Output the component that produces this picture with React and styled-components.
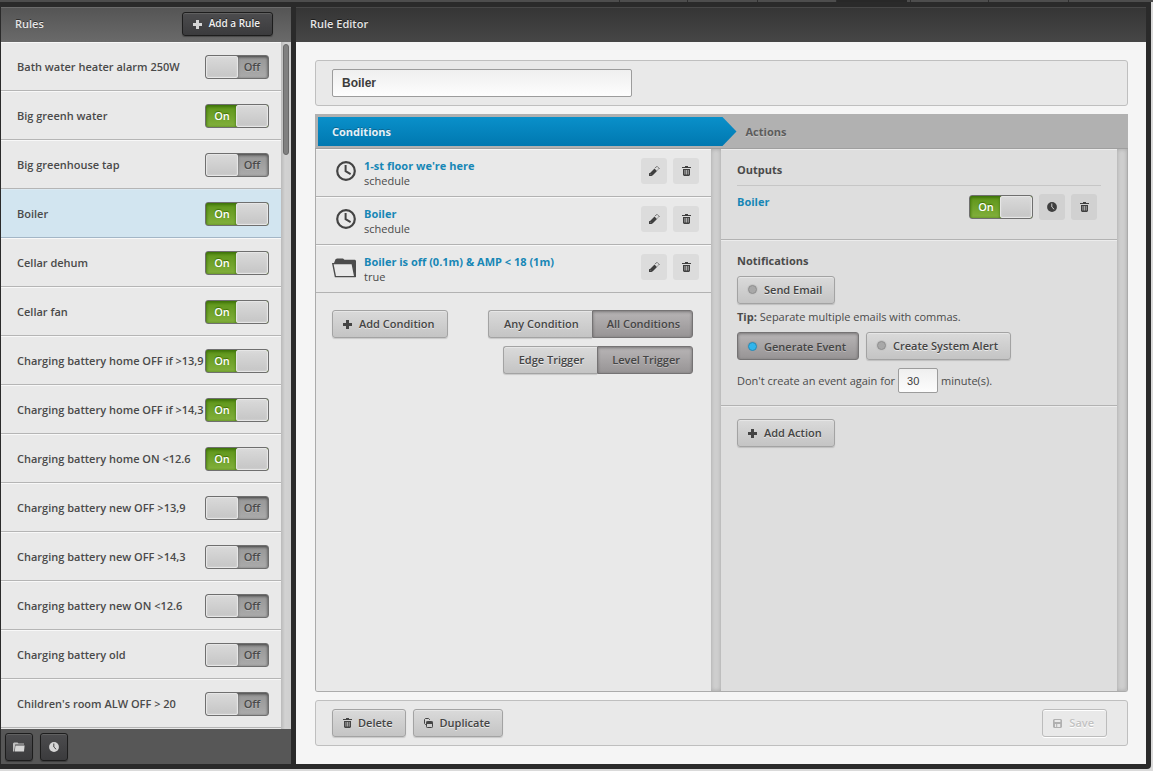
import React, { useState } from "react";
import styled, { createGlobalStyle, css } from "styled-components";

const GlobalStyle = createGlobalStyle`
  *, *::before, *::after { box-sizing: border-box; }
  body {
    margin: 0;
    background: #fff;
    color: #4a4a4a;
    font: 11px/15px "Open Sans", "Noto Sans", sans-serif;
  }
  button, input { font: inherit; color: inherit; margin: 0; }
  button { cursor: pointer; }
  a { color: #1787b6; text-decoration: none; }
  h1, h2, h3, p, ul { margin: 0; padding: 0; font-size: 11px; list-style: none; }
`;

/* ---------- page frame ---------- */

const Page = styled.div`
  display: flex;
  flex-direction: column;
  height: 100vh;
  min-height: 600px;
  margin-right: 3px;
  padding-right: 2px;
  padding-bottom: 2px;
  background: #dadada;
`;

const TabStrip = styled.nav`
  display: flex;
  justify-content: flex-end;
  gap: 3px;
  flex: none;
  height: 2px;
  margin-right: -2px;
  padding-right: 2px;
  background: #4d4d4d;
`;

const StripTab = styled.span`
  width: ${(p) => p.$width}px;
  border-left: 1px solid #2e2e2e;
  background: ${(p) => (p.$active ? "#282828" : "#4d4d4d")};
`;

const Frame = styled.div`
  display: grid;
  grid-template-columns: 290px minmax(0, 1fr);
  column-gap: 5px;
  flex: 1;
  min-height: 0;
  padding: 5px 5px 5px 1px;
  background: #2a2a2a;
  border-radius: 0 0 4px 0;
`;

const Panel = styled.section`
  display: flex;
  flex-direction: column;
  min-width: 0;
  min-height: 0;
  background: ${(p) => p.$bg};
`;

const PanelHeader = styled.header`
  display: flex;
  align-items: center;
  justify-content: space-between;
  flex: none;
  height: 35px;
  padding: 0 18px 3px 14px;
  border-top: 1px solid ${(p) => (p.$dark ? "#484848" : "#6c6c6c")};
  background: ${(p) =>
    p.$dark ? "linear-gradient(#353535, #464646)" : "linear-gradient(#555, #6a6a6a)"};
  color: #e6e6e6;
  text-shadow: 0 -1px 0 rgba(0, 0, 0, 0.5);
`;

const PanelTitle = styled.h1`
  font-weight: 600;
`;

/* ---------- buttons ---------- */

const DarkButton = styled.button`
  display: inline-flex;
  align-items: center;
  justify-content: center;
  gap: 6px;
  height: ${(p) => (p.$square ? 28 : 24)}px;
  width: ${(p) => (p.$square ? "28px" : "auto")};
  padding: ${(p) => (p.$square ? 0 : "0 12px 0 10px")};
  border: 1px solid #1d1d1d;
  border-radius: 3px;
  background: linear-gradient(#4c4c4e, #3b3b3d);
  box-shadow: inset 0 1px 0 #606060, 0 1px 1px rgba(0, 0, 0, 0.3);
  color: #f0f0f0;
  font-size: 10px;
  font-weight: 600;
  text-shadow: 0 -1px 0 #222;
  & svg { color: #d6d6d6; }
`;

const pressed = css`
  border-color: #757374;
  background: linear-gradient(#b8b5b6, #979495);
  box-shadow: inset 0 1px 3px rgba(0, 0, 0, 0.35);
  text-shadow: 0 1px 0 rgba(255, 255, 255, 0.3);
`;

const Button = styled.button`
  display: inline-flex;
  align-items: center;
  gap: 6px;
  height: 28px;
  padding: 0 12px 1px 10px;
  border: 1px solid #a3a3a3;
  border-radius: 3px;
  background: linear-gradient(#dadada, #c4c4c4);
  box-shadow: inset 0 1px 0 #e6e6e6, 0 1px 1px rgba(0, 0, 0, 0.14);
  color: #444;
  font-weight: 600;
  white-space: nowrap;
  text-shadow: 0 1px 0 rgba(255, 255, 255, 0.6);
  ${(p) => p.$pressed && pressed}
  &:disabled {
    cursor: default;
    border-color: #bcbcbc;
    background: transparent;
    box-shadow: inset 0 1px 0 #fff, 0 1px 0 #fff;
    color: #c2c2c2;
    text-shadow: 0 1px 0 #fff;
  }
`;

const ToggleButton = styled(Button)`
  padding-bottom: ${(p) => (p.$pressed ? 0 : 1)}px;
`;

const Segments = styled.div`
  display: flex;
`;

const Segment = styled(Button)`
  padding: 0 ${(p) => (p.$pressed ? 12 : 13)}px 1px ${(p) => (p.$pressed ? 14 : 15)}px;
  &:first-child { border-right: 0; border-radius: 3px 0 0 3px; }
  &:last-child { border-radius: 0 3px 3px 0; }
`;

const IconButton = styled.button`
  display: inline-flex;
  align-items: center;
  justify-content: center;
  width: 26px;
  height: 26px;
  padding: 0;
  border: 0;
  border-radius: 3px;
  background: ${(p) => (p.$deep ? "#d1d1d1" : "#dcdcdc")};
  color: #3f3f3f;
`;

const Led = styled.span`
  width: 9px;
  height: 9px;
  margin-right: 1px;
  border: 1px solid ${(p) => (p.$on ? "#2789b4" : "#8f8f8f")};
  border-radius: 50%;
  background: ${(p) => (p.$on ? "#31b5ec" : "#a8a8a8")};
  box-shadow: 0 0 0 1px ${(p) => (p.$on ? "#a09ea0" : "#c6c6c6")};
`;

/* ---------- switch ---------- */

const SwitchLabel = styled.label`
  position: relative;
  display: flex;
  flex: none;
  width: 64px;
  height: 24px;
  border: 1px solid #6f6f6f;
  border-radius: 3px;
  overflow: hidden;
  background: ${(p) =>
    p.$on ? "linear-gradient(#5c9418, #82b03c)" : "linear-gradient(#969696, #ababab)"};
  box-shadow: inset 0 1px 3px rgba(0, 0, 0, 0.35);
  cursor: pointer;
`;

const SwitchInput = styled.input`
  position: absolute;
  inset: 0;
  opacity: 0;
  cursor: pointer;
`;

const SwitchText = styled.span`
  flex: 1;
  order: ${(p) => (p.$on ? 0 : 1)};
  padding: ${(p) => (p.$on ? "0 0 0 2px" : "0 2px 0 0")};
  color: ${(p) => (p.$on ? "#fff" : "#4a4a4a")};
  font-weight: 600;
  line-height: 22px;
  text-align: center;
  text-shadow: ${(p) => (p.$on ? "0 -1px 1px #3c6e05" : "0 1px 0 #b8b8b8")};
  box-shadow: inset 0 1px 3px ${(p) => (p.$on ? "#3d7a06" : "rgba(0,0,0,.3)")};
`;

const Knob = styled.span`
  width: 32px;
  border: 1px solid #e6e6e6;
  border-radius: 2px;
  background: linear-gradient(#d9d9d9, #c6c6c6);
  box-shadow: inset 0 0 2px #ddd, 0 0 1px #666;
`;

function Switch({ label, defaultOn }) {
  const [on, setOn] = useState(defaultOn);
  return (
    <SwitchLabel $on={on}>
      <SwitchInput
        type="checkbox"
        aria-label={label}
        checked={on}
        onChange={(e) => setOn(e.target.checked)}
      />
      <SwitchText $on={on}>{on ? "On" : "Off"}</SwitchText>
      <Knob />
    </SwitchLabel>
  );
}

/* ---------- icons ---------- */

const Svg = styled.svg`
  display: block;
  flex: none;
`;

const PlusIcon = () => (
  <Svg width="10" height="10" viewBox="0 0 10 10" fill="currentColor" aria-hidden="true">
    <path d="M3 1h3v3h3v3H6v3H3V7H0V4h3z" shapeRendering="crispEdges" />
  </Svg>
);

const TrashIcon = () => (
  <Svg width="9" height="10" viewBox="0 0 9 10" fill="currentColor" aria-hidden="true">
    <path
      fillRule="evenodd"
      d="M3 0h3v1h3v1H0V1h3zM1 3h7v6l-1 1H2L1 9zM2.6 4v4.6h.7V4zM4.2 4v4.6h.7V4zM5.8 4v4.6h.7V4z"
    />
  </Svg>
);

const PencilIcon = () => (
  <Svg width="12" height="12" viewBox="0 0 12 12" fill="currentColor" aria-hidden="true">
    <path d="M1 8h1l4.5-4.5L9 6l-4.500 4.500H4V11H1z" />
    <path
      d="M7.200 3L9 1.200 11.200 3.400 9.400 5.200"
      fill="none"
      stroke="currentColor"
      strokeWidth=".9"
      strokeDasharray="1.200 .5"
    />
    <path d="M1.800 8.600l1.700 1.700" stroke="#bbb" strokeWidth=".4" />
  </Svg>
);

const ClockSolidIcon = () => (
  <Svg width="10" height="10" viewBox="0 0 10 10" aria-hidden="true">
    <circle cx="5" cy="5" r="4.9" fill="currentColor" />
    <path d="M4.8 1.5V5l2.4 2.3" fill="none" stroke="var(--hand, #d1d1d1)" strokeWidth="1" />
  </Svg>
);

const FolderSolidIcon = () => (
  <Svg width="12" height="10" viewBox="0 0 12 10" fill="currentColor" aria-hidden="true">
    <path d="M0 9.5V1.5L1 .5h3.5l1 1H11v1H2.2L1.2 9.5z" opacity=".85" />
    <path d="M2.4 3.4H11.6L11 9.5H1.8z" />
  </Svg>
);

const CopyIcon = () => (
  <Svg width="10" height="11" viewBox="0 0 10 11" aria-hidden="true">
    <path d="M2 7.5h-.6L.5 6.6V2.4l.9-.9h3.2l.9.9V3" fill="none" stroke="currentColor" />
    <rect x="2.5" y="4.5" width="6" height="6" rx=".8" fill="none" stroke="currentColor" />
    <path d="M2.5 4.500h6v2.500h-6z" fill="currentColor" />
  </Svg>
);

const FloppyIcon = () => (
  <Svg width="10" height="10" viewBox="0 0 10 10" aria-hidden="true">
    <path
      fillRule="evenodd"
      fill="#b0b0b0"
      d="M1 1h7l1 1v7l-1 1H1L0 9V2zM1.6 2v2h5.8V2zM2 6v3h1.2V6zM4.2 6v3h3V6z"
    />
  </Svg>
);

const ScheduleIcon = () => (
  <Svg width="20" height="20" viewBox="0 0 20 20" fill="none" stroke="#444" aria-hidden="true">
    <circle cx="10" cy="10" r="8.8" strokeWidth="2.2" />
    <path d="M9.6 4v6.200l5 3" strokeWidth="2" />
  </Svg>
);

const FolderIcon = () => (
  <Svg width="24" height="21" viewBox="0 0 24 21" aria-hidden="true">
    <path d="M2 6L3.5 2.2 5 1.5h6l1.5 1.3H23l1 1V20h-2L20 6z" fill="#4c4c4c" />
    <path d="M.8 6.6h19.4L22.8 19.6H3.4z" fill="#e9e9e9" stroke="#4c4c4c" strokeWidth="1.4" />
  </Svg>
);

/* ---------- rule list ---------- */

const ListArea = styled.div`
  display: grid;
  grid-template-columns: minmax(0, 1fr) 10px;
  flex: 1;
  min-height: 0;
`;

const RuleList = styled.ul`
  overflow: hidden;
  background: #e9e9e9;
`;

const RuleRow = styled.li`
  display: flex;
  align-items: center;
  height: 49px;
  padding: 1px 12px 0 16px;
  border-top: 1px solid #f8f8f8;
  border-bottom: 1px solid #b5b5b5;
  background: ${(p) => (p.$selected ? "#d2e5f0" : "#e9e9e9")};
  ${(p) => p.$selected && "border-top-color: #dceaf3; border-bottom-color: #a3b6c6;"}
`;

const RuleName = styled.span`
  flex: 1;
  min-width: 0;
  padding-bottom: 2px;
  overflow: hidden;
  white-space: nowrap;
  font-weight: 600;
`;

const ScrollTrack = styled.div`
  padding: 2px;
  background: linear-gradient(90deg, #bababa, #d2d2d2 40%, #cfcfcf);
`;

const ScrollThumb = styled.div`
  width: 6px;
  height: 111px;
  border: 1px solid #686868;
  border-radius: 3px;
  background: #808080;
`;

const ListFooter = styled.footer`
  display: flex;
  gap: 7px;
  flex: none;
  height: 35px;
  padding: 4px;
  background: #575757;
  --hand: #444;
`;

/* ---------- editor ---------- */

const EditorBody = styled.div`
  display: flex;
  flex-direction: column;
  flex: 1;
  min-height: 0;
  padding: 18px 18px 18px 19px;
`;

const Box = styled.div`
  display: flex;
  align-items: center;
  gap: 7px;
  flex: none;
  height: 46px;
  padding: 0 20px 0 16px;
  border: 1px solid #bfbfbf;
  border-radius: 3px;
  background: #e9e9e9;
`;

const Spacer = styled.span`
  flex: 1;
`;

const TextInput = styled.input`
  height: ${(p) => (p.$small ? 25 : 28)}px;
  width: ${(p) => (p.$small ? 40 : 300)}px;
  padding: ${(p) => (p.$small ? "0 8px" : "0 9px")};
  border: 1px solid #9c9c9c;
  border-radius: 2px;
  background: linear-gradient(#efefef, #fdfdfd);
  color: #3c3c3c;
  font: ${(p) => (p.$small ? "11px" : "bold 12px")} "Liberation Sans", Arial, sans-serif;
`;

const Flow = styled.div`
  display: flex;
  flex-direction: column;
  flex: 1;
  min-height: 0;
  margin: 8px 0;
`;

const Steps = styled.div`
  display: flex;
  flex: none;
  height: 35px;
  padding: 3px 3px 2px;
  border-bottom: 1px solid #9f9f9f;
  background: #b1b1b1;
`;

const Step = styled.button`
  padding: 0;
  border: 0;
  background: none;
  color: #5c5c5c;
  font-weight: 700;
  text-align: left;
  text-shadow: 0 1px 0 #c6c6c6;
  ${(p) =>
    p.$active &&
    css`
      width: calc(50% + 15px);
      margin-right: 9px;
      padding-left: 14px;
      background: linear-gradient(#0a90ca, #0078b0);
      clip-path: polygon(0 0, calc(100% - 14px) 0, 100% 50%, calc(100% - 14px) 100%, 0 100%);
      color: #e4f1f8;
      text-shadow: 0 -1px 0 #0a6591;
    `}
`;

const Columns = styled.div`
  display: grid;
  grid-template-columns: minmax(0, 395fr) 10px minmax(0, 396fr) 10px;
  flex: 1;
  min-height: 0;
  border: 1px solid #ababab;
  border-top: 0;
  border-radius: 0 0 3px 3px;
  overflow: hidden;
`;

const Column = styled.div`
  overflow: hidden;
  background: ${(p) => (p.$shade ? "#dedede" : "#e9e9e9")};
`;

const Gutter = styled.div`
  background: #cfcfcf;
  box-shadow: inset 0 0 4px #a6a6a6;
`;

const ConditionRow = styled.li`
  display: flex;
  align-items: flex-start;
  gap: 6px;
  height: 48px;
  padding: 8px 12px 0 16px;
  border-top: 1px solid #f8f8f8;
  border-bottom: 1px solid #b2b2b2;
`;

const ConditionIcon = styled.span`
  display: flex;
  justify-content: flex-end;
  width: 24px;
  margin: 3px 2px 0 0;
`;

const ConditionText = styled.div`
  flex: 1;
  min-width: 0;
`;

const ConditionTitle = styled.a`
  display: block;
  font-weight: 700;
`;

const ConditionTools = styled.div`
  display: flex;
  align-items: flex-start;
  justify-content: space-between;
  padding: 17px 18px 0 16px;
`;

const SegmentStack = styled.div`
  display: flex;
  flex-direction: column;
  align-items: flex-end;
  gap: 8px;
`;

const ActionSection = styled.section`
  padding: 12px 16px;
  border-top: 1px solid #ececec;
  border-bottom: 1px solid #b2b2b2;
  &:last-child { border-bottom: 0; }
`;

const SectionTitle = styled.h3`
  padding-bottom: ${(p) => (p.$ruled ? 8 : 0)}px;
  border-bottom: ${(p) => (p.$ruled ? "1px solid #c6c6c6" : "0")};
  font-weight: 700;
`;

const OutputRow = styled.div`
  display: flex;
  align-items: center;
  gap: 6px;
  padding: 8px 4px 7px 0;
  --hand: #d1d1d1;
`;

const OutputName = styled.a`
  flex: 1;
  align-self: flex-start;
  font-weight: 700;
`;

const ButtonLine = styled.div`
  display: flex;
  gap: 7px;
  margin-top: 8px;
`;

const Note = styled.p`
  margin-top: 5px;
`;

const EventDelay = styled.label`
  display: flex;
  align-items: center;
  gap: 3px;
  margin-top: 8px;
`;

const RULES = [
  ["Bath water heater alarm 250W", false],
  ["Big greenh water", true],
  ["Big greenhouse tap", false],
  ["Boiler", true],
  ["Cellar dehum", true],
  ["Cellar fan", true],
  ["Charging battery home OFF if >13,9", true],
  ["Charging battery home OFF if >14,3", true],
  ["Charging battery home ON <12.6", true],
  ["Charging battery new OFF >13,9", false],
  ["Charging battery new OFF >14,3", false],
  ["Charging battery new ON <12.6", false],
  ["Charging battery old", false],
  ["Children's room ALW OFF > 20", false],
];

const CONDITIONS = [
  { title: "1-st floor we're here", detail: "schedule", icon: ScheduleIcon },
  { title: "Boiler", detail: "schedule", icon: ScheduleIcon },
  { title: "Boiler is off (0.1m) & AMP < 18 (1m)", detail: "true", icon: FolderIcon },
];

const STRIP_TABS = [65, 67, 76, 71, 75, 77, 83];

export default function App() {
  return (
    <>
      <GlobalStyle />
      <Page>
        <TabStrip>
          {STRIP_TABS.map((width, i) => (
            <StripTab key={i} $width={width} $active={i === 3} />
          ))}
        </TabStrip>
        <Frame>
          <Panel $bg="#e9e9e9">
            <PanelHeader>
              <PanelTitle>Rules</PanelTitle>
              <DarkButton type="button">
                <PlusIcon />
                Add a Rule
              </DarkButton>
            </PanelHeader>
            <ListArea>
              <RuleList>
                {RULES.map(([name, on]) => (
                  <RuleRow key={name} $selected={name === "Boiler"}>
                    <RuleName>{name}</RuleName>
                    <Switch label={name} defaultOn={on} />
                  </RuleRow>
                ))}
              </RuleList>
              <ScrollTrack>
                <ScrollThumb />
              </ScrollTrack>
            </ListArea>
            <ListFooter>
              <DarkButton type="button" $square aria-label="Folders">
                <FolderSolidIcon />
              </DarkButton>
              <DarkButton type="button" $square aria-label="Schedules">
                <ClockSolidIcon />
              </DarkButton>
            </ListFooter>
          </Panel>

          <Panel $bg="#f5f5f5">
            <PanelHeader $dark>
              <PanelTitle>Rule Editor</PanelTitle>
            </PanelHeader>
            <EditorBody>
              <Box>
                <TextInput aria-label="Rule name" defaultValue="Boiler" />
              </Box>

              <Flow>
                <Steps>
                  <Step type="button" $active>Conditions</Step>
                  <Step type="button">Actions</Step>
                </Steps>
                <Columns>
                  <Column>
                    <ul>
                      {CONDITIONS.map(({ title, detail, icon: Icon }) => (
                        <ConditionRow key={title}>
                          <ConditionIcon>
                            <Icon />
                          </ConditionIcon>
                          <ConditionText>
                            <ConditionTitle href="#">{title}</ConditionTitle>
                            {detail}
                          </ConditionText>
                          <IconButton type="button" aria-label="Edit">
                            <PencilIcon />
                          </IconButton>
                          <IconButton type="button" aria-label="Delete">
                            <TrashIcon />
                          </IconButton>
                        </ConditionRow>
                      ))}
                    </ul>
                    <ConditionTools>
                      <Button type="button">
                        <PlusIcon />
                        Add Condition
                      </Button>
                      <SegmentStack>
                        <Segments>
                          <Segment type="button">Any Condition</Segment>
                          <Segment type="button" $pressed>All Conditions</Segment>
                        </Segments>
                        <Segments>
                          <Segment type="button">Edge Trigger</Segment>
                          <Segment type="button" $pressed>Level Trigger</Segment>
                        </Segments>
                      </SegmentStack>
                    </ConditionTools>
                  </Column>
                  <Gutter />
                  <Column $shade>
                    <ActionSection>
                      <SectionTitle $ruled>Outputs</SectionTitle>
                      <OutputRow>
                        <OutputName href="#">Boiler</OutputName>
                        <Switch label="Boiler output" defaultOn />
                        <IconButton type="button" $deep aria-label="Schedule">
                          <ClockSolidIcon />
                        </IconButton>
                        <IconButton type="button" $deep aria-label="Delete">
                          <TrashIcon />
                        </IconButton>
                      </OutputRow>
                    </ActionSection>
                    <ActionSection>
                      <SectionTitle>Notifications</SectionTitle>
                      <ButtonLine>
                        <Button type="button">
                          <Led />
                          Send Email
                        </Button>
                      </ButtonLine>
                      <Note>
                        <strong>Tip:</strong> Separate multiple emails with commas.
                      </Note>
                      <ButtonLine>
                        <ToggleButton type="button" $pressed aria-pressed="true">
                          <Led $on />
                          Generate Event
                        </ToggleButton>
                        <ToggleButton type="button" aria-pressed="false">
                          <Led />
                          Create System Alert
                        </ToggleButton>
                      </ButtonLine>
                      <EventDelay>
                        Don't create an event again for
                        <TextInput $small defaultValue="30" />
                        minute(s).
                      </EventDelay>
                    </ActionSection>
                    <ActionSection>
                      <Button type="button">
                        <PlusIcon />
                        Add Action
                      </Button>
                    </ActionSection>
                  </Column>
                  <Gutter />
                </Columns>
              </Flow>

              <Box>
                <Button type="button">
                  <TrashIcon />
                  Delete
                </Button>
                <Button type="button">
                  <CopyIcon />
                  Duplicate
                </Button>
                <Spacer />
                <Button type="button" disabled>
                  <FloppyIcon />
                  Save
                </Button>
              </Box>
            </EditorBody>
          </Panel>
        </Frame>
      </Page>
    </>
  );
}
